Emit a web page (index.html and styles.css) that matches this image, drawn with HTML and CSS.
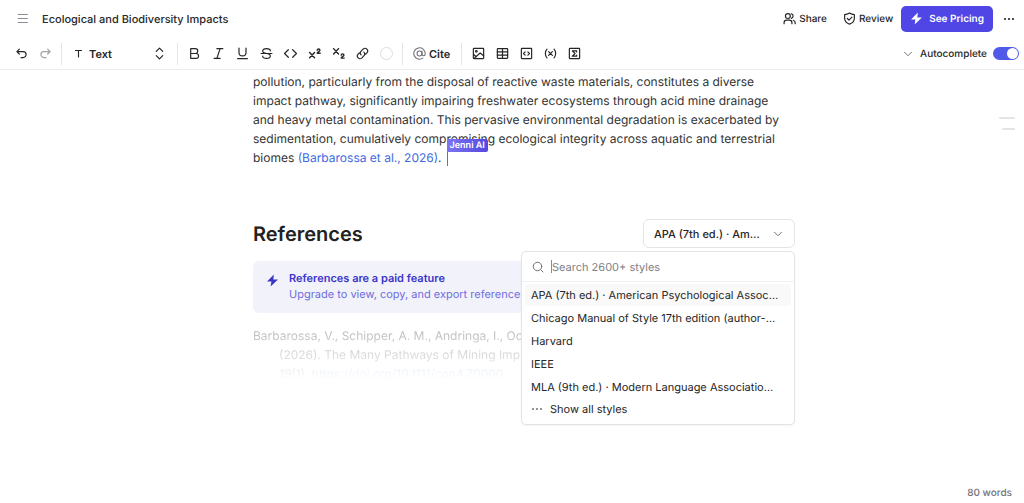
FILE: index.html
```html
<!DOCTYPE html>
<html lang="en">
<head>
<meta charset="utf-8">
<meta name="viewport" content="width=device-width, initial-scale=1">
<title>Ecological and Biodiversity Impacts</title>
<link rel="stylesheet" href="styles.css">
</head>
<body>
<header class="topbar">
  <button class="menu-btn" aria-label="Menu"><svg class="icon" viewBox="0 0 24 24"><path d="M4 4.500h17M4 12h17M4 19.500h17"/></svg></button>
  <h1 class="doc-title">Ecological and Biodiversity Impacts</h1>
  <div class="top-actions">
    <button class="text-btn"><svg class="icon" viewBox="0 0 24 24"><circle cx="9" cy="7.500" r="4.500"/><path d="M2 21.500v-1.500a5 5 0 0 1 5-5h4.500a5 5 0 0 1 5 5v1.500M15.500 3.200a4.500 4.500 0 0 1 0 8.600M19 15.300a5 5 0 0 1 3.500 4.700v1.500"/></svg>Share</button>
    <button class="text-btn"><svg class="icon" viewBox="0 0 24 24"><path d="M12 1.800c2.800 2 5.800 2.900 9 3v6.700c0 5.500-3.600 9-9 10.900-5.400-1.900-9-5.400-9-10.900V4.800c3.200-.1 6.200-1 9-3zM8 12l3 3 5.500-5.500"/></svg>Review</button>
    <button class="pricing-btn"><svg class="icon solid" viewBox="0 0 24 24"><path d="M14.500 1 2 14h8l-1.500 9L22 10h-8.500z"/></svg>See Pricing</button>
    <button class="more-btn" aria-label="More"><svg class="icon solid" viewBox="0 0 24 24"><circle cx="4" cy="12" r="2.200"/><circle cx="12" cy="12" r="2.200"/><circle cx="20" cy="12" r="2.200"/></svg></button>
  </div>
</header>

<div class="toolbar" role="toolbar" aria-label="Formatting">
  <button class="tool" aria-label="Undo"><svg class="icon" viewBox="0 0 24 24"><path d="M8 4 3.500 8.500 8 13M3.500 8.500h11.500a5.500 5.500 0 0 1 0 11h-4"/></svg></button>
  <button class="tool" aria-label="Redo" disabled><svg class="icon" viewBox="0 0 24 24"><path d="m16 4 4.500 4.500L16 13M20.500 8.500H9a5.500 5.500 0 0 0 0 11h4"/></svg></button>
  <span class="divider"></span>
  <label class="style-picker">
    <svg class="icon small" viewBox="0 0 24 24"><path d="M4 4h16M12 4v17"/></svg>
    <select class="style-select" aria-label="Text style"><option>Text</option></select>
    <svg class="icon chevrons" viewBox="0 0 24 24"><path d="m6 8 6-6 6 6M6 16l6 6 6-6"/></svg>
  </label>
  <span class="divider"></span>
  <button class="tool" aria-label="Bold"><svg class="icon" viewBox="0 0 24 24"><path d="M5 3h8.500a4.500 4.500 0 0 1 0 9H5zM5 12h10a4.500 4.500 0 0 1 0 9H5z"/></svg></button>
  <button class="tool" aria-label="Italic"><svg class="icon" viewBox="0 0 24 24"><path d="M9 3h11M4 21h11M15 3 9 21"/></svg></button>
  <button class="tool" aria-label="Underline"><svg class="icon" viewBox="0 0 24 24"><path d="M5.500 2v8a6.500 6.500 0 0 0 13 0V2M3 21.500h18"/></svg></button>
  <button class="tool" aria-label="Strikethrough"><svg class="icon" viewBox="0 0 24 24"><path d="M19 7c0-2.500-2.500-4-7-4S5 5 5 7.500 7 11.500 12 12s7 2 7 4.500-2.500 4.500-7 4.500-7-1.500-7-4M2 12h20"/></svg></button>
  <button class="tool" aria-label="Code"><svg class="icon" viewBox="0 0 24 24"><path d="m8 5-7 7 7 7M16 5l7 7-7 7"/></svg></button>
  <button class="tool" aria-label="Superscript"><svg class="icon heavy" viewBox="0 0 24 24"><path d="m3 10 9 10M12 10 3 20M17 6c0-3 5-3 5 0 0 2-5 3-5 5.500h5.500"/></svg></button>
  <button class="tool" aria-label="Subscript"><svg class="icon heavy" viewBox="0 0 24 24"><path d="m3 3 9 10M12 3 3 13M17 15c0-3 5-3 5 0 0 2-5 3-5 5.500h5.500"/></svg></button>
  <button class="tool" aria-label="Link"><svg class="icon" viewBox="0 0 24 24"><path d="M9.500 14.500a5 5 0 0 1 0-7l4-4a5 5 0 0 1 7 7L18 13M14.500 9.500a5 5 0 0 1 0 7l-4 4a5 5 0 0 1-7-7L6 11"/></svg></button>
  <button class="tool" aria-label="Text color"><span class="swatch"></span></button>
  <span class="divider"></span>
  <button class="cite-btn"><svg class="icon muted" viewBox="0 0 24 24"><circle cx="12" cy="12" r="4.500"/><path d="M16.500 7.500V13a3 3 0 0 0 6 0v-1A10.500 10.500 0 1 0 18 20.600"/></svg>Cite</button>
  <span class="divider"></span>
  <button class="tool" aria-label="Image"><svg class="icon" viewBox="0 0 24 24"><rect x="2.500" y="2.500" width="19" height="19" rx="1"/><circle cx="8" cy="8" r="1.500"/><path d="M4 21 15 11l6.500 5M3 14l5 4"/></svg></button>
  <button class="tool" aria-label="Table"><svg class="icon" viewBox="0 0 24 24"><rect x="2.500" y="3" width="19" height="18" rx="1"/><path d="M2.500 9h19M2.500 15h19M12 3v18"/></svg></button>
  <button class="tool" aria-label="Code block"><svg class="icon" viewBox="0 0 24 24"><rect x="2.500" y="2.500" width="19" height="19" rx="1"/><path d="m9.500 9-3 3 3 3M14.500 9l3 3-3 3"/></svg></button>
  <button class="tool" aria-label="Inline equation"><svg class="icon" viewBox="0 0 24 24"><path d="M5.500 4C1.500 8 1.500 16 5.500 20M18.500 4c4 4 4 12 0 16M8.500 8.500l7 7M15.500 8.500l-7 7"/></svg></button>
  <button class="tool" aria-label="Block equation"><svg class="icon" viewBox="0 0 24 24"><rect x="2.500" y="2.500" width="19" height="19" rx="1"/><path d="M16 9V7H8l5 5-5 5h8v-2"/></svg></button>
  <label class="autocomplete">
    <svg class="icon thin" viewBox="0 0 24 24"><path d="m5 8.500 7 7 7-7"/></svg>
    Autocomplete
    <input class="switch" type="checkbox" role="switch" checked>
  </label>
</div>

<main class="editor">
  <nav class="outline" aria-label="Outline"><span class="outline-mark"></span><span class="outline-mark sub"></span></nav>
  <article class="page">
    <p class="paragraph">pollution, particularly from the disposal of reactive waste materials, constitutes a diverse<br>impact pathway, significantly impairing freshwater ecosystems through acid mine drainage<br>and heavy metal contamination. This pervasive environmental degradation is exacerbated by<br>sedimentation, cumulatively compromising ecological integrity across aquatic and terrestrial<br>biomes <a class="citation" href="#ref-1">(Barbarossa et al., 2026)</a>.<span class="ai-cursor"><span class="ai-label">Jenni AI</span></span></p>

    <section class="references">
      <div class="ref-head">
        <h2 class="ref-title">References</h2>
        <button class="picker-btn" aria-haspopup="listbox" aria-expanded="true"><span class="ellipsis">APA (7th ed.) · American Psychological Association</span><svg class="icon thin" viewBox="0 0 24 24"><path d="m5 8.500 7 7 7-7"/></svg></button>
        <div class="menu">
          <label class="search"><svg class="icon thin" viewBox="0 0 24 24"><circle cx="11" cy="11" r="8.500"/><path d="m17.500 17.500 4.500 4.500"/></svg><span class="caret"></span><input class="search-input" type="text" placeholder="Search 2600+ styles" aria-label="Search styles"></label>
          <div class="options">
            <button class="option active">APA (7th ed.) · American Psychological Association</button>
            <button class="option">Chicago Manual of Style 17th edition (author-date)</button>
            <button class="option">Harvard</button>
            <button class="option">IEEE</button>
            <button class="option">MLA (9th ed.) · Modern Language Association 9th edition</button>
          </div>
          <button class="option show-all"><svg class="icon solid" viewBox="0 0 24 24"><circle cx="4" cy="12" r="2"/><circle cx="12" cy="12" r="2"/><circle cx="20" cy="12" r="2"/></svg>Show all styles</button>
        </div>
      </div>
      <div class="callout">
        <svg class="icon solid" viewBox="0 0 24 24"><path d="M14.500 1 2 14h8l-1.500 9L22 10h-8.500z"/></svg>
        <div>
          <strong class="callout-title">References are a paid feature</strong>
          <p class="callout-text">Upgrade to view, copy, and export references</p>
        </div>
      </div>
      <p class="entry" id="ref-1">Barbarossa, V., Schipper, A. M., Andringa, I., Oc<br>(2026). The Many Pathways of Mining Imp<br><i>19</i>(1). <a class="citation" href="#ref-1">https://doi.org/10.1111/con4.70000</a></p>
    </section>
  </article>
</main>
<footer class="word-count">80 words</footer>
</body>
</html>
```
FILE: styles.css
```css
* { box-sizing: border-box; }
body {
  margin: 0;
  height: 100vh;
  display: flex;
  flex-direction: column;
  overflow: hidden;
  background: #fff;
  color: #262626;
  font-family: Inter, "Liberation Sans", sans-serif;
  font-size: 11px;
  text-rendering: geometricPrecision;
}
button, input, select { font: inherit; color: inherit; text-rendering: inherit; }
button {
  display: flex;
  align-items: center;
  border: 0;
  padding: 0;
  background: none;
  white-space: nowrap;
}
h1, h2, p { margin: 0; }
a { text-decoration: none; }

.icon {
  flex: none;
  width: 13px;
  height: 13px;
  fill: none;
  stroke: currentColor;
  stroke-width: 2.2;
  stroke-linecap: round;
  stroke-linejoin: round;
}
.icon.solid { fill: currentColor; stroke: none; }
.icon.small { width: 9px; height: 9px; stroke-width: 3; }
.icon.heavy { stroke-width: 2.6; }
.icon.thin { width: 12px; height: 12px; color: #71717a; stroke-width: 2; }
.icon.muted { color: #71717a; stroke-width: 2; }

.topbar {
  display: flex;
  align-items: center;
  height: 37px;
  padding: 0 9px 0 16px;
}
.menu-btn { color: #8b8b94; }
.menu-btn .icon { stroke-width: 2; }
.doc-title { margin-left: 13px; font-size: 11px; font-weight: 500; }
.top-actions { display: flex; align-items: center; margin-left: auto; font-size: 10px; font-weight: 500; }
.text-btn { gap: 3px; margin-right: 16px; }
.pricing-btn {
  gap: 6px;
  height: 26px;
  margin-left: -8px;
  padding: 0 9px;
  border-radius: 5px;
  background: #4f46e5;
  color: #fff;
  font-weight: 600;
}
.more-btn { margin-left: 10px; }
.more-btn .icon { width: 12px; height: 12px; }

.toolbar {
  display: flex;
  align-items: center;
  height: 33px;
  padding: 1px 5px 0 9px;
  border-bottom: 1px solid #ececee;
}
.tool { justify-content: center; width: 24px; height: 24px; }
.tool:disabled { color: #a1a1aa; }
.divider { width: 1px; height: 22px; margin: 0 4px; background: #e4e4e7; }
.style-picker { display: flex; align-items: center; width: 107px; padding: 0 7px 0 8px; }
.style-select {
  flex: 1;
  min-width: 0;
  margin: 0 6px;
  padding: 0;
  border: 0;
  background: none;
  appearance: none;
  font-weight: 600;
}
.swatch { width: 13px; height: 13px; border: 1px solid #dcdce0; border-radius: 50%; }
.cite-btn { gap: 3px; padding: 0 7px 0 6px; font-weight: 600; }
.autocomplete {
  display: flex;
  align-items: center;
  gap: 6px;
  margin-left: auto;
  font-size: 10px;
  font-weight: 500;
}
.switch {
  appearance: none;
  width: 26px;
  height: 13px;
  margin: 0;
  padding: 1px;
  border-radius: 7px;
  background: #4f5ae8;
}
.switch::before {
  content: "";
  display: block;
  width: 11px;
  height: 11px;
  margin-left: auto;
  border-radius: 50%;
  background: #fff;
}

.editor { position: relative; flex: 1; min-height: 0; padding: 2px 0 0 24px; }
.page { max-width: 542px; margin: 0 auto; }
.outline {
  position: absolute;
  top: 47px;
  right: 9px;
  display: flex;
  flex-direction: column;
  align-items: flex-end;
  gap: 9px;
}
.outline-mark { width: 16px; height: 2px; border-radius: 1px; background: #e4e4e7; }
.outline-mark.sub { width: 13px; }

.paragraph { font-size: 12px; line-height: 19px; color: #333; white-space: nowrap; }
.citation { color: #4169e1; }
.ai-cursor {
  position: relative;
  display: inline-block;
  width: 1px;
  height: 15px;
  margin-left: 5px;
  background: #6d5ff0;
  vertical-align: -4px;
}
.ai-label {
  position: absolute;
  left: 0;
  bottom: 14px;
  padding: 0 3px;
  border-radius: 0 2px 2px 0;
  background: linear-gradient(90deg, #7c74f3, #5548e0);
  color: #fff;
  font-size: 9px;
  font-weight: 600;
  line-height: 13px;
  white-space: nowrap;
}

.references { margin-top: 52px; }
.ref-head { position: relative; display: flex; align-items: center; justify-content: space-between; }
.ref-title { font-size: 20px; font-weight: 600; line-height: 24px; color: #222; }
.picker-btn {
  justify-content: space-between;
  gap: 10px;
  width: 152px;
  height: 29px;
  padding: 0 10px;
  border: 1px solid #e4e4e7;
  border-radius: 6px;
  font-weight: 500;
}
.ellipsis, .option { overflow: hidden; text-overflow: ellipsis; }
.menu {
  position: absolute;
  z-index: 1;
  top: 32px;
  right: 0;
  width: 274px;
  padding-bottom: 4px;
  border: 1px solid #e4e4e7;
  border-radius: 5px;
  background: #fff;
  box-shadow: 0 1px 2px rgba(0, 0, 0, 0.05);
}
.search { display: flex; align-items: center; height: 30px; padding: 0 10px; border-bottom: 1px solid #f0f0f2; }
.caret { width: 1px; height: 13px; margin-left: 7px; background: #8a8a90; }
.search-input { flex: 1; min-width: 0; padding: 0; border: 0; outline: 0; background: none; }
.search-input::placeholder { color: #808086; opacity: 1; }
.options { display: grid; gap: 1px; padding-top: 2px; }
.options, .show-all { margin: 0 3px; }
.option {
  display: block;
  min-width: 0;
  height: 22px;
  padding: 0 12px 0 6px;
  border-radius: 3px;
  line-height: 22px;
  text-align: left;
}
.option.active { background: #f9f9fa; }
.option.show-all { display: flex; align-items: center; gap: 7px; }
.show-all .icon { width: 12px; height: 12px; color: #71717a; }

.callout {
  display: flex;
  gap: 10px;
  margin-top: 13px;
  padding: 9px 13px 11px;
  border-radius: 6px;
  background: #f2f3fa;
  color: #3a35c9;
  line-height: 16px;
}
.callout .icon { margin-top: 4px; }
.callout-title { display: block; font-weight: 600; }
.callout-text { color: #6f6ce0; }
.entry {
  margin-top: 13px;
  padding-left: 26px;
  text-indent: -26px;
  font-size: 12px;
  line-height: 19px;
  color: #333;
  white-space: nowrap;
  mask-image: linear-gradient(rgba(0, 0, 0, 0.36), rgba(0, 0, 0, 0.08) 80%, transparent 95%);
}
.word-count { padding: 0 12px 3px; color: #71717a; font-size: 10px; font-weight: 500; line-height: 13px; text-align: right; }
```
